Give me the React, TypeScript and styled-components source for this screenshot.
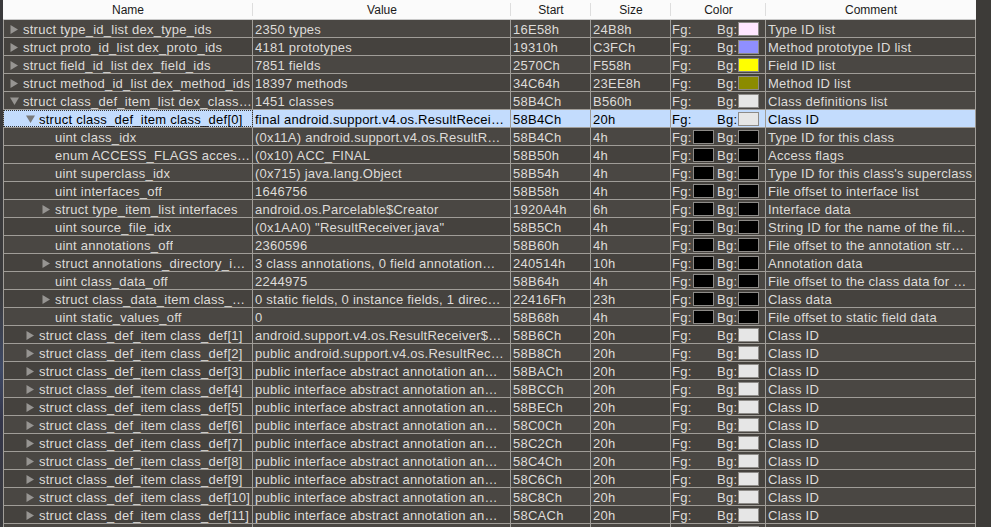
import React from 'react'
import styled, { createGlobalStyle } from 'styled-components'

const GlobalStyle = createGlobalStyle`
  html, body {
    margin: 0;
    padding: 0;
    background: #3d3b38;
  }
  body {
    font-family: "Liberation Sans", Arial, Helvetica, sans-serif;
    overflow: hidden;
  }
`

const Screen = styled.div`
  display: flex;
  align-items: flex-start;
  width: 991px;
  height: 527px;
  overflow: hidden;
  background: #3d3b38;
`

const DesktopStrip = styled.div`
  width: 3px;
  height: 527px;
  flex: none;
  background: linear-gradient(180deg, #3a3a3c 0%, #3a3a3c 55%, #3f4a66 70%, #34364a 80%, #3a3a3c 100%);
`

const Table = styled.div`
  display: flex;
  flex-direction: column;
  width: 973px;
  flex: none;
`

const columns = '250px 258px 80px 80px 95px 210px'

const Header = styled.div`
  display: grid;
  grid-template-columns: ${columns};
  height: 20px;
  flex: none;
  box-sizing: border-box;
  background: #fbfbfb;
  border-bottom: 1px solid #c9c9c9;
`

const HeaderCell = styled.div<{ $first?: boolean }>`
  display: flex;
  align-items: center;
  justify-content: center;
  font-size: 12px;
  color: #1a1a1a;
  position: relative;
  &::before {
    content: '';
    display: ${({ $first }) => ($first ? 'none' : 'block')};
    position: absolute;
    left: -1px;
    top: 3px;
    bottom: 3px;
    width: 1px;
    background: #dedede;
  }
`

const Row = styled.div<{ $selected?: boolean; $alt?: boolean }>`
  display: grid;
  grid-template-columns: ${columns};
  height: 18px;
  flex: none;
  box-sizing: border-box;
  border-bottom: 1px solid #a09d98;
  background: ${({ $selected, $alt }) => ($selected ? '#c3dcfd' : $alt ? '#45423e' : '#4a4743')};
  color: ${({ $selected }) => ($selected ? '#000' : '#dedcd9')};
  font-size: 13px;
  letter-spacing: 0.25px;
`

const Cell = styled.div`
  box-sizing: border-box;
  height: 17px;
  padding: 1px 0 0 2px;
  line-height: 17px;
  white-space: nowrap;
  overflow: hidden;
  text-overflow: ellipsis;
  border-right: 1px solid #a09d98;
`

const NameCell = styled(Cell)<{ $level: number; $focus?: boolean }>`
  display: flex;
  align-items: flex-start;
  padding-left: ${({ $level }) => 6 + $level * 16}px;
  border-left: 1px solid #a09d98;
  outline: ${({ $focus }) => ($focus ? '1px dotted #333' : 'none')};
  outline-offset: -1px;
`

const NameText = styled.span`
  min-width: 0;
  overflow: hidden;
  text-overflow: ellipsis;
  white-space: nowrap;
`

const Disclosure = styled.span`
  width: 13px;
  flex: none;
  height: 16px;
  display: flex;
  align-items: center;
`

const ColorCell = styled(Cell)`
  display: grid;
  grid-template-columns: 21px 24px 21px 21px;
  align-items: start;
  padding-left: 1px;
`

const Swatch = styled.span<{ $color: string }>`
  display: block;
  width: 21px;
  height: 14px;
  margin-top: 1px;
  box-sizing: border-box;
  border: 1px solid #8d8b88;
  background: ${({ $color }) => $color};
`

type Node = 'open' | 'closed' | 'leaf'

interface RowData {
  name: string
  level: number
  node: Node
  value: string
  start: string
  size: string
  fg?: string
  bg: string
  comment: string
  selected?: boolean
}

const rows: RowData[] = [
  { name: 'struct type_id_list dex_type_ids', level: 0, node: 'closed', value: '2350 types', start: '16E58h', size: '24B8h', bg: '#ffe6ff', comment: 'Type ID list' },
  { name: 'struct proto_id_list dex_proto_ids', level: 0, node: 'closed', value: '4181 prototypes', start: '19310h', size: 'C3FCh', bg: '#8f8fff', comment: 'Method prototype ID list' },
  { name: 'struct field_id_list dex_field_ids', level: 0, node: 'closed', value: '7851 fields', start: '2570Ch', size: 'F558h', bg: '#ffff00', comment: 'Field ID list' },
  { name: 'struct method_id_list dex_method_ids', level: 0, node: 'closed', value: '18397 methods', start: '34C64h', size: '23EE8h', bg: '#8b8b00', comment: 'Method ID list' },
  { name: 'struct class_def_item_list dex_class…', level: 0, node: 'open', value: '1451 classes', start: '58B4Ch', size: 'B560h', bg: '#e6e6e6', comment: 'Class definitions list' },
  { name: 'struct class_def_item class_def[0]', level: 1, node: 'open', value: 'final android.support.v4.os.ResultRecei…', start: '58B4Ch', size: '20h', bg: '#e6e6e6', comment: 'Class ID', selected: true },
  { name: 'uint class_idx', level: 2, node: 'leaf', value: '(0x11A) android.support.v4.os.ResultR…', start: '58B4Ch', size: '4h', fg: '#000', bg: '#000', comment: 'Type ID for this class' },
  { name: 'enum ACCESS_FLAGS access_flags', level: 2, node: 'leaf', value: '(0x10) ACC_FINAL', start: '58B50h', size: '4h', fg: '#000', bg: '#000', comment: 'Access flags' },
  { name: 'uint superclass_idx', level: 2, node: 'leaf', value: '(0x715) java.lang.Object', start: '58B54h', size: '4h', fg: '#000', bg: '#000', comment: "Type ID for this class's superclass" },
  { name: 'uint interfaces_off', level: 2, node: 'leaf', value: '1646756', start: '58B58h', size: '4h', fg: '#000', bg: '#000', comment: 'File offset to interface list' },
  { name: 'struct type_item_list interfaces', level: 2, node: 'closed', value: 'android.os.Parcelable$Creator', start: '1920A4h', size: '6h', fg: '#000', bg: '#000', comment: 'Interface data' },
  { name: 'uint source_file_idx', level: 2, node: 'leaf', value: '(0x1AA0) "ResultReceiver.java"', start: '58B5Ch', size: '4h', fg: '#000', bg: '#000', comment: 'String ID for the name of the fil…' },
  { name: 'uint annotations_off', level: 2, node: 'leaf', value: '2360596', start: '58B60h', size: '4h', fg: '#000', bg: '#000', comment: 'File offset to the annotation str…' },
  { name: 'struct annotations_directory_i…', level: 2, node: 'closed', value: '3 class annotations, 0 field annotation…', start: '240514h', size: '10h', fg: '#000', bg: '#000', comment: 'Annotation data' },
  { name: 'uint class_data_off', level: 2, node: 'leaf', value: '2244975', start: '58B64h', size: '4h', fg: '#000', bg: '#000', comment: 'File offset to the class data for …' },
  { name: 'struct class_data_item class_d…', level: 2, node: 'closed', value: '0 static fields, 0 instance fields, 1 direc…', start: '22416Fh', size: '23h', fg: '#000', bg: '#000', comment: 'Class data' },
  { name: 'uint static_values_off', level: 2, node: 'leaf', value: '0', start: '58B68h', size: '4h', fg: '#000', bg: '#000', comment: 'File offset to static field data' },
  { name: 'struct class_def_item class_def[1]', level: 1, node: 'closed', value: 'android.support.v4.os.ResultReceiver$…', start: '58B6Ch', size: '20h', bg: '#e6e6e6', comment: 'Class ID' },
  { name: 'struct class_def_item class_def[2]', level: 1, node: 'closed', value: 'public android.support.v4.os.ResultRec…', start: '58B8Ch', size: '20h', bg: '#e6e6e6', comment: 'Class ID' },
]

// the remaining class_def entries are all annotation interfaces
const annotationStarts = ['58BACh', '58BCCh', '58BECh', '58C0Ch', '58C2Ch', '58C4Ch', '58C6Ch', '58C8Ch', '58CACh', '58CCCh']
annotationStarts.forEach((start, i) => {
  rows.push({
    name: `struct class_def_item class_def[${i + 3}]`,
    level: 1,
    node: 'closed',
    value: 'public interface abstract annotation an…',
    start,
    size: '20h',
    bg: '#e6e6e6',
    comment: 'Class ID',
  })
})

const Triangle: React.FC<{ open: boolean; color: string }> = ({ open, color }) =>
  open ? (
    <svg width="9" height="8" viewBox="0 0 9 8">
      <polygon points="0,0.5 9,0.5 4.5,8" fill={color} />
    </svg>
  ) : (
    <svg width="8" height="9" viewBox="0 0 8 9">
      <polygon points="0.5,0 8,4.5 0.5,9" fill={color} />
    </svg>
  )

const TreeRow: React.FC<{ row: RowData; index: number }> = ({ row, index }) => {
  const arrowColor = row.selected ? '#7a7a7a' : '#979592'
  return (
    <Row $selected={row.selected} $alt={index % 2 === 1}>
      <NameCell $level={row.level} $focus={row.selected}>
        <Disclosure>{row.node !== 'leaf' && <Triangle open={row.node === 'open'} color={arrowColor} />}</Disclosure>
        <NameText>{row.name}</NameText>
      </NameCell>
      <Cell>{row.value}</Cell>
      <Cell>{row.start}</Cell>
      <Cell>{row.size}</Cell>
      <ColorCell>
        <span>Fg:</span>
        <span>{row.fg && <Swatch $color={row.fg} />}</span>
        <span>Bg:</span>
        <Swatch $color={row.bg} />
      </ColorCell>
      <Cell>{row.comment}</Cell>
    </Row>
  )
}

const App: React.FC = () => {
  return (
    <>
      <GlobalStyle />
      <Screen>
        <DesktopStrip />
        <Table>
          <Header>
            <HeaderCell $first>Name</HeaderCell>
            <HeaderCell>Value</HeaderCell>
            <HeaderCell>Start</HeaderCell>
            <HeaderCell>Size</HeaderCell>
            <HeaderCell>Color</HeaderCell>
            <HeaderCell>Comment</HeaderCell>
          </Header>
          {rows.map((row, i) => (
            <TreeRow key={i} row={row} index={i} />
          ))}
        </Table>
      </Screen>
    </>
  )
}

export default App
